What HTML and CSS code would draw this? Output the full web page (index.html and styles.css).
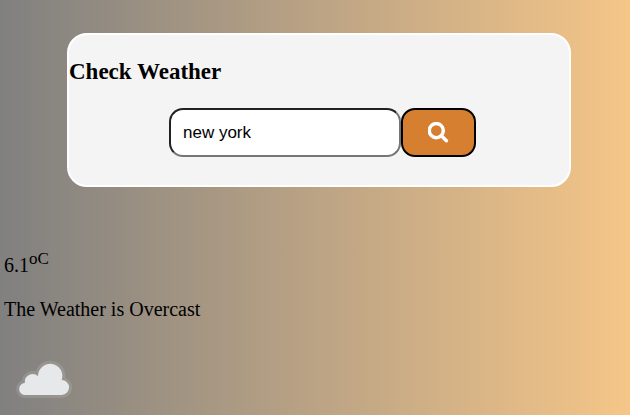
FILE: index.html
```html
<!DOCTYPE html>
<html lang="en">
<head>
<meta charset="utf-8">
<title>Check Weather</title>
<link rel="stylesheet" href="styles.css">
</head>
<body>
<main>
  <section class="card">
    <h1 class="title">Check Weather</h1>
    <form class="search">
      <input class="city" type="text" aria-label="City" value="new york">
      <button class="submit" type="button" aria-label="Search">
        <svg class="search-icon" viewBox="0 0 20 20" aria-hidden="true">
          <circle cx="7.9" cy="8.2" r="6.7"/>
          <path d="M13 13.300 L17.500 17.800"/>
        </svg>
      </button>
    </form>
  </section>
  <section class="result">
    <p class="reading">6.1<sup>oC</sup></p>
    <p class="reading">The Weather is Overcast</p>
    <svg class="cloud" viewBox="0 0 64 64" role="img" aria-label="Overcast">
      <path class="halo" d="M21.5 45 A6 6 0 0 1 20.8 33 A8 8 0 0 1 34 26 A12.2 12.2 0 1 1 57.7 30 A7.5 7.5 0 0 1 57.5 45 Z"/>
      <path class="shape" d="M21.5 45 A6 6 0 0 1 20.8 33 A8 8 0 0 1 34 26 A12.2 12.2 0 1 1 57.7 30 A7.5 7.5 0 0 1 57.5 45 Z"/>
    </svg>
  </section>
</main>
</body>
</html>
```
FILE: styles.css
```css
* {
  box-sizing: border-box;
}

body {
  margin: 0;
  min-height: 100vh;
  background: linear-gradient(to right, #808080, #f5c688);
  color: #000;
  font-family: "Liberation Serif", "Times New Roman", serif;
  font-size: 20px;
  line-height: 24px;
}

main {
  padding-top: 33px;
}

.card {
  margin: 0 59px 0 67px;
  padding: 24px 0 28px;
  border: 2px solid #fff;
  border-radius: 20px;
  background: #f4f4f4;
}

.title {
  margin: 0 0 23px;
  font-size: 23px;
  line-height: 26px;
}

.search {
  display: flex;
  margin: 0 93px 0 100px;
}

.city {
  flex: 1;
  min-width: 0;
  height: 49px;
  padding: 0 12px;
  border: 2px inset #767676;
  border-radius: 14px;
  background: #fff;
  color: #000;
  font: 17px "Liberation Sans", Arial, sans-serif;
}

.submit {
  display: flex;
  align-items: center;
  justify-content: center;
  width: 75px;
  height: 49px;
  padding: 0;
  border: 2px solid #000;
  border-radius: 14px;
  background: #d67f31;
}

.search-icon {
  width: 21px;
  height: 21px;
  fill: none;
  stroke: #fff;
  stroke-width: 3.3;
  stroke-linecap: round;
}

.result {
  padding: 66px 4px 0;
}

.reading {
  margin: 0 0 20px;
}

sup {
  font-size: 17px;
  line-height: 0;
}

.cloud {
  display: block;
  width: 64px;
  height: 64px;
  margin-top: 29px;
  overflow: visible;
}

.halo {
  fill: none;
  stroke: #fff;
  stroke-opacity: 0.12;
  stroke-width: 6;
  stroke-linejoin: round;
}

.shape {
  fill: #e6e8e9;
}
```
